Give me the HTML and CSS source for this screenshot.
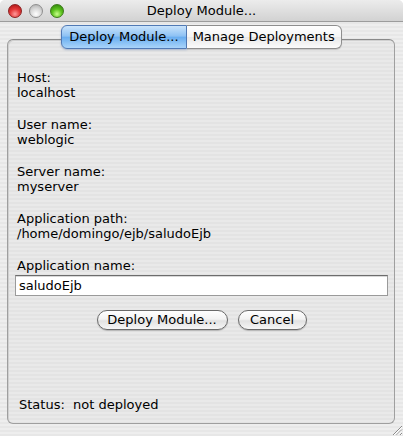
FILE: index.html
```html
<!DOCTYPE html>
<html>
<head>
<meta charset="utf-8">
<link rel="stylesheet" href="styles.css">
</head>
<body>
<div class="window">
  <div class="titlebar">
    <div class="lights">
      <span class="light red"></span>
      <span class="light gray"></span>
      <span class="light green"></span>
    </div>
    <div class="title">Deploy Module...</div>
  </div>
  <div class="content">
    <div class="panel">
      <div class="tabs">
        <div class="tab selected">Deploy Module...</div>
        <div class="tab">Manage Deployments</div>
      </div>
      <div class="fields">
        <div class="group"><div class="line">Host:</div><div class="line">localhost</div></div>
        <div class="group"><div class="line">User name:</div><div class="line">weblogic</div></div>
        <div class="group"><div class="line">Server name:</div><div class="line">myserver</div></div>
        <div class="group"><div class="line">Application path:</div><div class="line">/home/domingo/ejb/saludoEjb</div></div>
        <div class="group"><div class="line">Application name:</div></div>
      </div>
      <div class="input">saludoEjb</div>
      <div class="buttons">
        <div class="btn deploy">Deploy Module...</div>
        <div class="btn cancel">Cancel</div>
      </div>
      <div class="status">Status:&nbsp; not deployed</div>
    </div>
  </div>
  <svg class="grip" width="13" height="13" viewBox="0 0 13 13">
    <path d="M3 12 L12 3 M6.5 12 L12 6.5 M10 12 L12 10" stroke="#8a8a8a" stroke-width="1"/>
    <path d="M4 12 L12 4 M7.5 12 L12 7.5 M11 12 L12 11" stroke="#ffffff" stroke-width="1"/>
  </svg>
</div>
</body>
</html>
```
FILE: styles.css
```css
html, body {
  margin: 0;
  padding: 0;
  background: #fff;
}
body {
  font-family: "DejaVu Sans", "Lucida Grande", sans-serif;
  font-size: 13px;
  color: #000;
}
.window {
  position: relative;
  width: 403px;
  height: 436px;
  display: flex;
  flex-direction: column;
  background: repeating-linear-gradient(to bottom, #eeeeee 0 2px, #e7e7e7 2px 4px);
  border-radius: 5px 5px 0 0;
  overflow: hidden;
}
.titlebar {
  height: 21px;
  flex: none;
  display: flex;
  align-items: center;
  position: relative;
  background: linear-gradient(to bottom, #ececec, #d2d2d2);
  border-bottom: 1px solid #9c9c9c;
}
.lights {
  display: flex;
  gap: 7px;
  margin-left: 8px;
  margin-top: 1px;
}
.light {
  width: 14px;
  height: 14px;
  border-radius: 50%;
  box-sizing: border-box;
}
.red {
  background: radial-gradient(circle at 50% 75%, #ff9a9a 0%, #e53a3a 45%, #a41010 100%);
  border: 1px solid #8a2020;
}
.gray {
  background: radial-gradient(circle at 50% 75%, #ffffff 0%, #d8d8d8 50%, #a8a8a8 100%);
  border: 1px solid #8e8e8e;
}
.green {
  background: radial-gradient(circle at 50% 75%, #c8ff8a 0%, #5cc21e 45%, #2a7a08 100%);
  border: 1px solid #3c7a1a;
}
.title {
  position: absolute;
  left: 0;
  right: 0;
  top: 3px;
  text-align: center;
  line-height: 16px;
}
.content {
  flex: 1;
  display: flex;
  padding: 17px 8px 12px 7px;
}
.panel {
  flex: 1;
  display: flex;
  flex-direction: column;
  border: 1px solid #9f9f9f;
  border-top-color: #8a8a8a;
  border-radius: 6px;
  background: repeating-linear-gradient(to bottom, #e9e9e9 0 2px, #e3e3e3 2px 4px);
  box-shadow: inset 1px 1px 0 #d0d0d0;
  padding: 0 6px 11px 7px;
}
.tabs {
  display: flex;
  align-self: center;
  margin-top: -15px;
  height: 24px;
}
.tab {
  box-sizing: border-box;
  height: 24px;
  line-height: 21px;
  padding: 0 6px;
  white-space: nowrap;
  background: linear-gradient(to bottom, #ffffff 0%, #f4f4f4 50%, #e8e8e8 51%, #fbfbfb 100%);
  border: 1px solid #8e8e8e;
  border-left: none;
  border-radius: 0 6px 6px 0;
  box-shadow: 0 1px 1px rgba(0,0,0,0.15);
}
.tab.selected {
  padding: 0 7px;
  border: 1px solid #5079b5;
  border-radius: 6px 0 0 6px;
  background: linear-gradient(to bottom, #c9e3fb 0%, #8ec2f4 45%, #6aaef0 52%, #a9d4fa 100%);
  box-shadow: 0 1px 2px rgba(40,80,150,0.35);
}
.fields {
  display: flex;
  flex-direction: column;
  gap: 17px;
  margin-top: 21px;
  padding-left: 2px;
}
.line {
  line-height: 15px;
  height: 15px;
  white-space: nowrap;
}
.input {
  margin-top: 2px;
  height: 21px;
  box-sizing: border-box;
  background: #fff;
  border: 1px solid #9a9a9a;
  border-top-color: #6c6c6c;
  box-shadow: inset 0 1px 0 #d8d8d8;
  padding-left: 3px;
  line-height: 19px;
}
.buttons {
  display: flex;
  justify-content: center;
  gap: 10px;
  margin-top: 14px;
}
.btn {
  box-sizing: border-box;
  height: 20px;
  line-height: 18px;
  border: 1px solid #6a6a6a;
  border-radius: 10px;
  text-align: center;
  background: linear-gradient(to bottom, #ffffff 0%, #f3f3f3 45%, #e2e2e2 55%, #f6f6f6 100%);
  box-shadow: 0 1px 1px rgba(0,0,0,0.2);
}
.deploy { width: 131px; }
.cancel { width: 69px; }
.status {
  margin-top: auto;
  padding-left: 4px;
  line-height: 15px;
}
.grip {
  position: absolute;
  right: 0;
  bottom: 0;
}
```
